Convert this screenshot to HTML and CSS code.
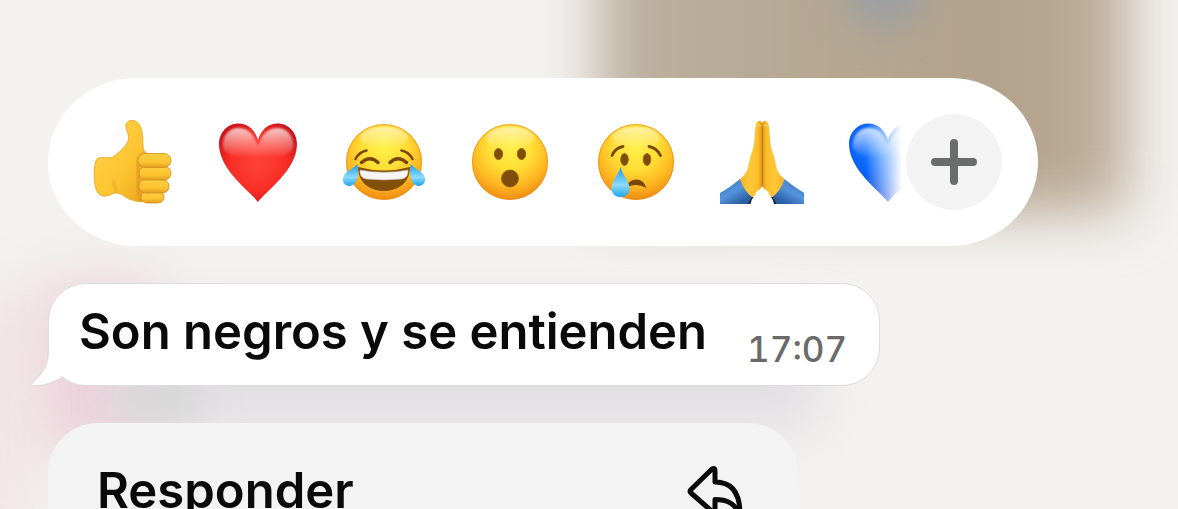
FILE: index.html
```html
<!DOCTYPE html>
<html lang="es">
<head>
<meta charset="utf-8">
<meta name="viewport" content="width=device-width, initial-scale=1">
<title>Reacciones</title>
<link rel="stylesheet" href="styles.css">
</head>
<body>
<div class="backdrop" aria-hidden="true">
  <div class="blob blob-photo"></div>
  <div class="blob blob-blue"></div>
  <div class="blob blob-edge"></div>
  <div class="blob blob-pink"></div>
  <div class="blob blob-shade"></div>
  <div class="blob blob-dark"></div>
</div>

<svg class="defs" width="0" height="0" aria-hidden="true">
  <defs>
    <radialGradient id="face" cx=".5" cy=".3" r=".72">
      <stop offset="0" stop-color="#fff04a"/><stop offset=".4" stop-color="#ffdf36"/><stop offset=".72" stop-color="#fdb721"/><stop offset="1" stop-color="#ee8710"/>
    </radialGradient>
    <linearGradient id="shine" x1="0" y1="0" x2="0" y2="1">
      <stop offset="0" stop-color="#fff" stop-opacity=".75"/><stop offset="1" stop-color="#fff" stop-opacity="0"/>
    </linearGradient>
    <radialGradient id="red" cx=".5" cy=".5" r=".6">
      <stop offset="0" stop-color="#ff4338"/><stop offset=".6" stop-color="#f92e26"/><stop offset="1" stop-color="#c8101a"/>
    </radialGradient>
    <radialGradient id="blue" cx=".4" cy=".3" r=".65">
      <stop offset="0" stop-color="#2a86fb"/><stop offset=".5" stop-color="#0c66fa"/><stop offset="1" stop-color="#0546e0"/>
    </radialGradient>
    <linearGradient id="tear" x1="0" y1="0" x2="0" y2="1">
      <stop offset="0" stop-color="#1d98e6"/><stop offset=".6" stop-color="#8bdcfb"/><stop offset="1" stop-color="#1ba4ee"/>
    </linearGradient>
    <linearGradient id="skin" x1="0" y1="0" x2="1" y2="1">
      <stop offset="0" stop-color="#ffd551"/><stop offset=".6" stop-color="#fdc32e"/><stop offset="1" stop-color="#e7a01c"/>
    </linearGradient>
    <linearGradient id="finger" x1="0" y1="0" x2="0" y2="1">
      <stop offset="0" stop-color="#ffd040"/><stop offset=".65" stop-color="#fcc230"/><stop offset="1" stop-color="#e39d1e"/>
    </linearGradient>
    <linearGradient id="palm" x1="0" y1="0" x2="1" y2="0">
      <stop offset="0" stop-color="#f5b022"/><stop offset=".4" stop-color="#ffc838"/><stop offset=".8" stop-color="#fcbd2b"/><stop offset="1" stop-color="#dd9415"/>
    </linearGradient>
    <linearGradient id="sleeve" x1="0" y1=".2" x2=".6" y2="1">
      <stop offset="0" stop-color="#3c78c0"/><stop offset=".5" stop-color="#5494da"/><stop offset="1" stop-color="#2a5ea6"/>
    </linearGradient>
    <filter id="soft" x="-20%" y="-20%" width="140%" height="140%"><feGaussianBlur stdDeviation="1"/></filter>
    <path id="heart" d="M42 82C34 71 3 50 3 24C3 12 12 3.500 22.500 3.500C32 3.500 39 10 42 20C45 10 52 3.500 61.500 3.500C72 3.500 81 12 81 24C81 50 50 71 42 82Z"/>
    <path id="heart-shine" d="M7 27C6 16 13 8 22.500 8C32 8 38 14 42 26C46 14 52 8 61.500 8C71 8 78 16 77 27C75 36 60 38 42 38C24 38 9 36 7 27Z"/>
    <g id="ball">
      <circle cx="42" cy="42" r="38" fill="url(#face)"/>
      <circle cx="42" cy="42" r="37.400" fill="none" stroke="#e88f18" stroke-width="1.200" opacity=".6"/>
      <ellipse cx="42" cy="18" rx="24" ry="11" fill="url(#shine)" filter="url(#soft)" opacity=".75"/>
    </g>
    <g id="praying-hand">
      <path fill="url(#sleeve)" d="M0 84V73Q9 68 20 59Q25 70 32 76L29 84Z"/>
      <path fill="#1c2533" d="M28 84L32 76L33.500 77Q31 80 30.500 84Z"/>
      <path fill="url(#palm)" d="M42.500 4Q42 .8 39 1Q36 1.500 35.500 7L34 24Q33.500 29 30.500 36Q29 43 27.500 49Q25.500 55 20 59Q24 71 32 77Q36 76 36 72Q41 69 42.500 66Z"/>
      <path fill="none" stroke="#fff0a0" stroke-width="1.200" opacity=".65" stroke-linecap="round" d="M38 6Q39 3.500 40.500 6"/>
    </g>
  </defs>
</svg>

<main class="overlay">
  <section class="reactions" aria-label="Reacciones">
    <div class="strip">
      <button class="emoji" type="button" aria-label="Me gusta">
        <svg viewBox="0 0 84 84">
          <path fill="url(#skin)" stroke="#e3a326" stroke-width=".800" d="M36 8C35 2 39 0 43 .5C47 1 49 3 51 8C54 17 52 25 54 31C56 35 60 37 60 42L58 81C48 83 40 80 34 76C30 73 26 72 22 74C17 77 11 77 8 73C3 66 3 44 7 39C10 36 18 39 23 37C29 32 35 28 38 21C40 16 37 13 36 8Z"/>
          <path fill="none" stroke="#d99222" stroke-width="3" opacity=".4" filter="url(#soft)" d="M23 60Q24 67 28 72"/>
          <path fill="none" stroke="#d99222" stroke-width="4" opacity=".6" filter="url(#soft)" d="M50 81Q48 66 48 41Q50 34 57 33"/>
          <g fill="url(#finger)" stroke="#d18e1e" stroke-width=".800">
            <rect x="51" y="71" width="23" height="12" rx="6"/>
            <rect x="49" y="59.500" width="30" height="13.500" rx="6.500"/>
            <rect x="49" y="46.500" width="32" height="13.500" rx="6.500"/>
            <rect x="48" y="33.500" width="33" height="14" rx="7"/>
          </g>
        </svg>
      </button>
      <button class="emoji" type="button" aria-label="Me encanta">
        <svg viewBox="0 0 84 84">
          <use href="#heart" fill="url(#red)"/>
          <use href="#heart-shine" fill="url(#shine)" filter="url(#soft)"/>
        </svg>
      </button>
      <button class="emoji" type="button" aria-label="Me divierte">
        <svg viewBox="0 0 84 84">
          <use href="#ball"/>
          <path fill="#83500a" d="M16 47Q42 54 68 47C68 62 57 71 42 71C27 71 16 62 16 47Z"/>
          <path fill="#f7f5f5" stroke="#b9a89b" stroke-width=".600" d="M18 50Q42 54.500 66 50C66.500 55 64 58.500 60 59Q42 61 24 59C20 58.500 17.500 55 18 50Z"/>
          <g fill="none" stroke="#7b4708" stroke-linecap="round">
            <path stroke-width="3.500" d="M19.500 42.500Q28 35 36 42.500M48 42.500Q56 35 64.500 42.500"/>
            <path stroke-width="2.600" d="M13.500 39Q17 32 24.500 30.500M59.500 30.500Q67 32 70.500 39"/>
          </g>
          <path id="joy-tear" fill="url(#tear)" d="M15.500 44C17 56 15 65 7.500 66C1 66 -1 59 3 54C6 50 11 49 15.500 44Z"/>
          <use href="#joy-tear" transform="matrix(-1 0 0 1 84 0)"/>
        </svg>
      </button>
      <button class="emoji" type="button" aria-label="Me asombra">
        <svg viewBox="0 0 84 84">
          <use href="#ball"/>
          <g fill="#7d4d09" stroke="#965c08" stroke-width=".800">
            <ellipse cx="30.500" cy="34" rx="4.200" ry="5.600"/>
            <ellipse cx="53.500" cy="34" rx="4.200" ry="5.600"/>
            <circle cx="42" cy="58.500" r="8.500"/>
          </g>
        </svg>
      </button>
      <button class="emoji" type="button" aria-label="Me entristece">
        <svg viewBox="0 0 84 84">
          <use href="#ball"/>
          <g fill="#7d4d09" stroke="#965c08" stroke-width=".800">
            <ellipse cx="30.500" cy="39.500" rx="3.800" ry="6"/>
            <ellipse cx="53" cy="39.500" rx="3.800" ry="6"/>
          </g>
          <path fill="none" stroke="#7b4708" stroke-width="2.800" stroke-linecap="round" d="M18 35.500Q21 28 29 26.500M55 26.500Q63 28 66.500 35.500"/>
          <path fill="#7b4708" d="M33 65Q36 59.500 43 59.500Q50 60 52.500 68Q43 62.500 33 67Z"/>
          <path fill="url(#tear)" d="M26.500 47C29 56 35.500 61 35.500 68.500C35.500 74 31.500 77 26.500 77C21.500 77 17.500 74 17.500 68.500C17.500 61 24 56 26.500 47Z"/>
        </svg>
      </button>
      <button class="emoji" type="button" aria-label="Gracias">
        <svg viewBox="0 0 84 84">
          <use href="#praying-hand"/>
          <use href="#praying-hand" transform="matrix(-1 0 0 1 84.500 0)"/>
          <path stroke="#b9770f" stroke-width="1" d="M42.300 6V66"/>
        </svg>
      </button>
      <button class="emoji" type="button" aria-label="Corazón azul">
        <svg viewBox="0 0 84 84">
          <use href="#heart" fill="url(#blue)"/>
          <use href="#heart-shine" fill="url(#shine)" filter="url(#soft)"/>
        </svg>
      </button>
    </div>
    <button class="more" type="button" aria-label="Más reacciones">
      <svg viewBox="0 0 48 48"><path d="M24 5V43M5 24H43"/></svg>
    </button>
  </section>

  <article class="bubble">
    <svg class="tail" viewBox="0 0 40 44" aria-hidden="true">
      <path class="tail-fill" d="M18 0C18 22 12 30 1 40.500C0 42 1 43 3 43C13 43 23 39 29 35.500L39 20V0Z"/>
      <path class="tail-line" d="M17.500 6C17.500 22 12 30 1 40.500C0 42 1 43 3 43C13 43 23 39 29 35.500"/>
    </svg>
    <p class="text">Son negros y se entienden</p>
    <time class="time" datetime="17:07">17:07</time>
  </article>

  <menu class="menu">
    <li>
      <button class="action" type="button">
        <span>Responder</span>
        <svg class="reply" viewBox="0 -2 60 60" aria-hidden="true">
          <path d="M5 26.500L25.500 6.500Q29 4 29 8V19C46 19 54 30 54 51C48 40 41 36.500 29 36.500V47Q29 51 25.500 48L5 30Q3 28 5 26.500Z"/>
        </svg>
      </button>
    </li>
  </menu>
</main>
</body>
</html>
```
FILE: styles.css
```css
* {
  box-sizing: border-box;
}

html,
body {
  height: 100%;
  margin: 0;
  overflow: hidden;
}

body {
  background: #f3f2f0;
  color: #0a0a0a;
  font-family: Inter, "Liberation Sans", sans-serif;
}

button {
  padding: 0;
  border: 0;
  background: none;
  color: inherit;
  font: inherit;
  cursor: pointer;
}

svg {
  display: block;
}

.defs {
  position: absolute;
}

/* Blurred chat behind the overlay */
.backdrop {
  position: fixed;
  inset: 0;
  overflow: hidden;
}

.blob {
  position: absolute;
}

.blob-photo {
  left: 598px;
  top: -100px;
  width: 530px;
  height: 312px;
  background: linear-gradient(90deg, #bcb1a1, #b7aa96 30%, #b2a28b 75%, #bfae9a);
  filter: blur(28px);
}

.blob-blue {
  left: 846px;
  top: -54px;
  width: 76px;
  height: 80px;
  border-radius: 50%;
  background: #979ea6;
  filter: blur(20px);
}

.blob-edge {
  left: -60px;
  top: 290px;
  width: 90px;
  height: 260px;
  background: #f1e6e6;
  filter: blur(24px);
}

.blob-pink {
  left: 40px;
  top: 284px;
  width: 120px;
  height: 170px;
  background: #ebcfd9;
  filter: blur(30px);
}

.blob-shade {
  left: 120px;
  top: 320px;
  width: 700px;
  height: 112px;
  background: #e1dfe2;
  filter: blur(26px);
}

.blob-dark {
  left: 120px;
  top: 376px;
  width: 80px;
  height: 44px;
  background: #d4d4d4;
  filter: blur(20px);
}

.overlay {
  position: relative;
  display: flex;
  flex-direction: column;
  align-items: flex-start;
  padding: 78px 48px 0;
}

.reactions {
  display: flex;
  align-items: center;
  width: 100%;
  max-width: 990px;
  padding: 36px 36px 36px 42px;
  border-radius: 88px / 84px;
  background: #fff;
}

.strip {
  display: flex;
  flex: 1;
  gap: 42px;
  min-width: 0;
  overflow: hidden;
  mask-image: linear-gradient(90deg, #000 calc(100% - 40px), transparent calc(100% - 4px));
}

.emoji {
  flex: none;
  width: 84px;
  height: 84px;
}

.more {
  display: grid;
  flex: none;
  place-items: center;
  width: 96px;
  height: 96px;
  border-radius: 50%;
  background: #f3f3f3;
}

.more svg {
  width: 48px;
  height: 48px;
  fill: none;
  stroke: #6b6d6c;
  stroke-width: 8;
  stroke-linecap: round;
}

.bubble {
  position: relative;
  display: flex;
  align-items: flex-end;
  gap: 40px;
  margin-top: 37px;
  padding: 18px 32px 23px 30px;
  border: 1px solid #dedbde;
  border-radius: 38px;
  background: #fff;
}

.tail {
  position: absolute;
  left: -18px;
  bottom: -2px;
  width: 40px;
  height: 44px;
}

.tail-fill {
  fill: #fff;
}

.tail-line {
  fill: none;
  stroke: #dcd3d8;
  stroke-width: 1;
}

.text {
  position: relative;
  margin: 0;
  font-size: 49px;
  font-weight: 600;
  line-height: 60px;
}

.time {
  margin-bottom: -8px;
  color: #6a6a6a;
  font-size: 35px;
  font-weight: 500;
  font-optical-sizing: none;
  font-variant-numeric: tabular-nums;
  line-height: 42px;
}

.menu {
  width: 100%;
  max-width: 750px;
  margin: 37px 0 0;
  padding: 36px 52px 36px 49px;
  border-radius: 50px;
  background: #f4f3f4;
  list-style: none;
}

.action {
  display: flex;
  align-items: center;
  justify-content: space-between;
  width: 100%;
  font-size: 49px;
  font-weight: 600;
  line-height: 64px;
}

.reply {
  width: 60px;
  height: 60px;
  fill: none;
  stroke: #0a0a0a;
  stroke-width: 5;
  stroke-linejoin: round;
}
```
